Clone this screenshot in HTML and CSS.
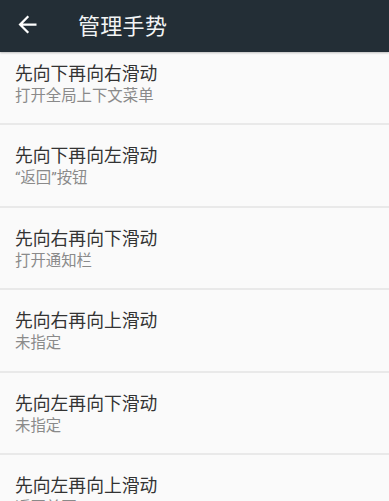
FILE: index.html
```html
<!DOCTYPE html>
<html lang="zh-CN">
<head>
<meta charset="utf-8">
<title>管理手势</title>
<link rel="stylesheet" href="styles.css">
</head>
<body>
<header class="appbar">
  <svg class="back" viewBox="0 0 24 24" width="27" height="27" aria-hidden="true">
    <path d="M20 11H7.83l5.59-5.59L12 4l-8 8 8 8 1.41-1.41L7.83 13H20v-2z" fill="#ffffff"/>
  </svg>
  <h1 class="title">管理手势</h1>
</header>
<ul class="list">
  <li class="item"><div class="primary">先向下再向右滑动</div><div class="secondary">打开全局上下文菜单</div></li>
  <li class="item"><div class="primary">先向下再向左滑动</div><div class="secondary">“返回”按钮</div></li>
  <li class="item"><div class="primary">先向右再向下滑动</div><div class="secondary">打开通知栏</div></li>
  <li class="item"><div class="primary">先向右再向上滑动</div><div class="secondary">未指定</div></li>
  <li class="item"><div class="primary">先向左再向下滑动</div><div class="secondary">未指定</div></li>
  <li class="item"><div class="primary">先向左再向上滑动</div><div class="secondary">返回首页</div></li>
</ul>
</body>
</html>
```
FILE: styles.css
```css
html, body {
  margin: 0;
  padding: 0;
  background: #fafafa;
  font-family: Roboto, "Noto Sans CJK SC", sans-serif;
  overflow: hidden;
}
.appbar {
  position: relative;
  z-index: 2;
  height: 52px;
  background: #232e36;
  display: flex;
  align-items: center;
  box-shadow: 0 1px 2px rgba(0,0,0,0.25);
}
.back {
  margin-left: 14px;
  margin-top: -4px;
  flex: none;
}
.title {
  margin: -5px 0 0 37px;
  font-size: 22px;
  font-weight: 400;
  color: #f2f4f5;
  letter-spacing: 0.3px;
}
.list {
  list-style: none;
  margin: -9.5px 0 0 0;
  padding: 0;
}
.item {
  box-sizing: content-box;
  height: 61.6px;
  padding: 19px 16px 0 15px;
  border-bottom: 2px solid #e9e9e9;
}
.primary {
  font-size: 17.8px;
  line-height: 23px;
  color: #333333;
  white-space: nowrap;
}
.secondary {
  font-size: 15.4px;
  line-height: 23px;
  color: #8a8a8a;
  white-space: nowrap;
}
```
